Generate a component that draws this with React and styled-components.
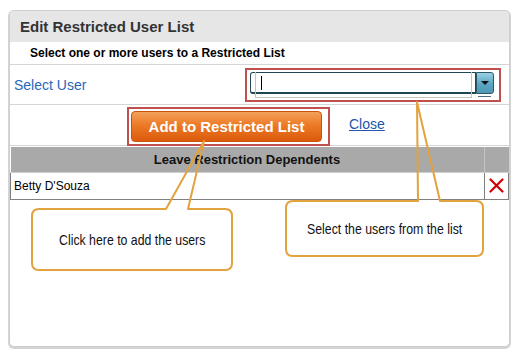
import React from "react";
import styled, { createGlobalStyle } from "styled-components";

const GlobalStyle = createGlobalStyle`
  html, body {
    margin: 0;
    padding: 0;
    background: #fff;
    font-family: "Liberation Sans", Arial, sans-serif;
  }
`;

const users = [{ id: 1, name: "Betty D'Souza" }];

const App = () => {
  return (
    <Page>
      <GlobalStyle />
      <Panel>
        <Header>Edit Restricted User List</Header>
        <SubRow>Select one or more users to a Restricted List</SubRow>
        <SelectRow>
          <FieldLabel>Select User</FieldLabel>
          <Highlight $pad="2px 5px 6px 3px">
            <Combo>
              <Field>
                <Caret />
              </Field>
              <DropButton>
                <Arrow />
              </DropButton>
            </Combo>
          </Highlight>
        </SelectRow>
        <ButtonRow>
          <Highlight $pad="2px 6px 2px 2px">
            <AddButton>Add to Restricted List</AddButton>
          </Highlight>
          <CloseLink href="#">Close</CloseLink>
        </ButtonRow>
        <Table>
          <thead>
            <tr>
              <HeadCell>Leave Restriction Dependents</HeadCell>
              <HeadCell $narrow />
            </tr>
          </thead>
          <tbody>
            {users.map((u) => (
              <tr key={u.id}>
                <Cell>{u.name}</Cell>
                <Cell $narrow>
                  <svg width="15" height="15" viewBox="0 0 15 15">
                    <path
                      d="M1.5 1.5 L13.5 13.5 M13.5 1.5 L1.5 13.5"
                      stroke="#d10000"
                      strokeWidth="2.2"
                      strokeLinecap="round"
                    />
                  </svg>
                </Cell>
              </tr>
            ))}
          </tbody>
        </Table>
      </Panel>

      <Overlay width="520" height="355" viewBox="0 0 520 355">
        <path
          d="M166 209 L204 141 L188 209 H225 Q232 209 232 216 V263 Q232 270 225 270 H39 Q32 270 32 263 V216 Q32 209 39 209 Z"
          fill="none"
          stroke="#e2a33f"
          strokeWidth="2"
          strokeLinejoin="round"
        />
        <path
          d="M418 201 L417 102 L440 201 H476 Q483 201 483 208 V249 Q483 256 476 256 H293 Q286 256 286 249 V208 Q286 201 293 201 Z"
          fill="none"
          stroke="#e2a33f"
          strokeWidth="2"
          strokeLinejoin="round"
        />
      </Overlay>
      <CalloutText style={{ left: 32, top: 209, width: 200, height: 61 }}>
        <Narrow>Click here to add the users</Narrow>
      </CalloutText>
      <CalloutText style={{ left: 286, top: 201, width: 197, height: 55 }}>
        <Narrow>Select the users from the list</Narrow>
      </CalloutText>
    </Page>
  );
};

export default App;

const Page = styled.div`
  position: relative;
  width: 520px;
  height: 355px;
  padding: 10px 0 0 9px;
  box-sizing: border-box;
`;

const Panel = styled.div`
  width: 501px;
  height: 337px;
  box-sizing: border-box;
  border: 1px solid #cfcfcf;
  border-radius: 5px;
  box-shadow: 0 1px 0 1px #d4d4d4;
  overflow: hidden;
  background: #fff;
`;

const Header = styled.div`
  height: 31px;
  background: #e6e6e6;
  display: flex;
  align-items: center;
  padding-left: 10px;
  font-size: 15px;
  font-weight: bold;
  color: #333;
`;

const SubRow = styled.div`
  height: 22px;
  border-bottom: 1px solid #d6d6d6;
  display: flex;
  align-items: center;
  padding-left: 20px;
  font-size: 12px;
  font-weight: bold;
  color: #000;
`;

const SelectRow = styled.div`
  height: 39px;
  border-bottom: 1px solid #d6d6d6;
  display: flex;
  align-items: center;
  justify-content: space-between;
  padding: 0 8px 0 4px;
`;

const FieldLabel = styled.span`
  font-size: 14px;
  color: #2a66b8;
`;

const Highlight = styled.div`
  border: 2px solid #c0504d;
  padding: ${(p) => p.$pad};
  display: flex;
  align-items: center;
`;

const Combo = styled.div`
  display: flex;
  align-items: flex-start;
`;

const Field = styled.div`
  position: relative;
  width: 226px;
  height: 22px;
  box-sizing: border-box;
  border: 1px solid #1f4752;
  border-bottom-width: 2px;
  border-radius: 3px 0 0 3px;
  background: #fff;
  padding: 3px 0 0 10px;

  &::after {
    content: "";
    position: absolute;
    left: 4px;
    right: 3px;
    top: -1px;
    height: 25px;
    border: 1px solid #c4c4c4;
    border-top: none;
    pointer-events: none;
  }
`;

const Caret = styled.div`
  width: 1px;
  height: 14px;
  background: #000;
`;

const DropButton = styled.div`
  position: relative;
  width: 18px;
  height: 22px;
  box-sizing: border-box;
  border: 1px solid #2c5866;
  border-radius: 0 3px 3px 0;
  background: linear-gradient(#9bd0e3, #5ba5c3 55%, #4e98b6);
  display: flex;
  align-items: center;
  justify-content: center;

  &::after {
    content: "";
    position: absolute;
    left: 1px;
    right: 2px;
    bottom: -4px;
    height: 1px;
    background: #4e6b7e;
  }
`;

const Arrow = styled.div`
  width: 0;
  height: 0;
  border-left: 4px solid transparent;
  border-right: 4px solid transparent;
  border-top: 4px solid #111;
`;

const ButtonRow = styled.div`
  height: 40px;
  border-bottom: 1px solid #d6d6d6;
  box-sizing: content-box;
  display: flex;
  align-items: flex-start;
  padding: 2px 0 0 117px;
  box-sizing: border-box;
  height: 41px;
  gap: 19px;
`;

const AddButton = styled.button`
  width: 191px;
  height: 31px;
  border: 1px solid #c9520c;
  border-radius: 4px;
  background: linear-gradient(#f3a05a, #ec7a26 45%, #db5a0b);
  color: #fff;
  font-family: "Liberation Sans", Arial, sans-serif;
  font-size: 15px;
  font-weight: bold;
  padding: 0;
  cursor: pointer;
`;

const CloseLink = styled.a`
  margin-top: 9px;
  font-size: 14px;
  color: #2255aa;
  text-decoration: underline;
`;

const Table = styled.table`
  width: 100%;
  border-collapse: collapse;
  margin-top: 1px;
`;

const HeadCell = styled.th`
  height: 25px;
  padding: 0;
  background: #a9a9a9;
  border-bottom: 1px solid #d0d0d0;
  border-left: ${(p) => (p.$narrow ? "1px solid #c4c4c4" : "none")};
  width: ${(p) => (p.$narrow ? "24px" : "auto")};
  font-size: 13px;
  font-weight: bold;
  color: #111;
  text-align: center;
`;

const Cell = styled.td`
  height: 24px;
  padding: ${(p) => (p.$narrow ? "2px 0 0" : "0 0 0 3px")};
  border: 1px solid #808080;
  border-top: none;
  font-size: 12px;
  color: #000;
  text-align: ${(p) => (p.$narrow ? "center" : "left")};
  vertical-align: middle;
`;

const Overlay = styled.svg`
  position: absolute;
  left: 0;
  top: 0;
  pointer-events: none;
`;

const CalloutText = styled.div`
  position: absolute;
  display: flex;
  align-items: center;
  justify-content: center;
`;

const Narrow = styled.span`
  display: inline-block;
  font-size: 15px;
  color: #111;
  white-space: nowrap;
  transform: scaleX(0.82);
`;
